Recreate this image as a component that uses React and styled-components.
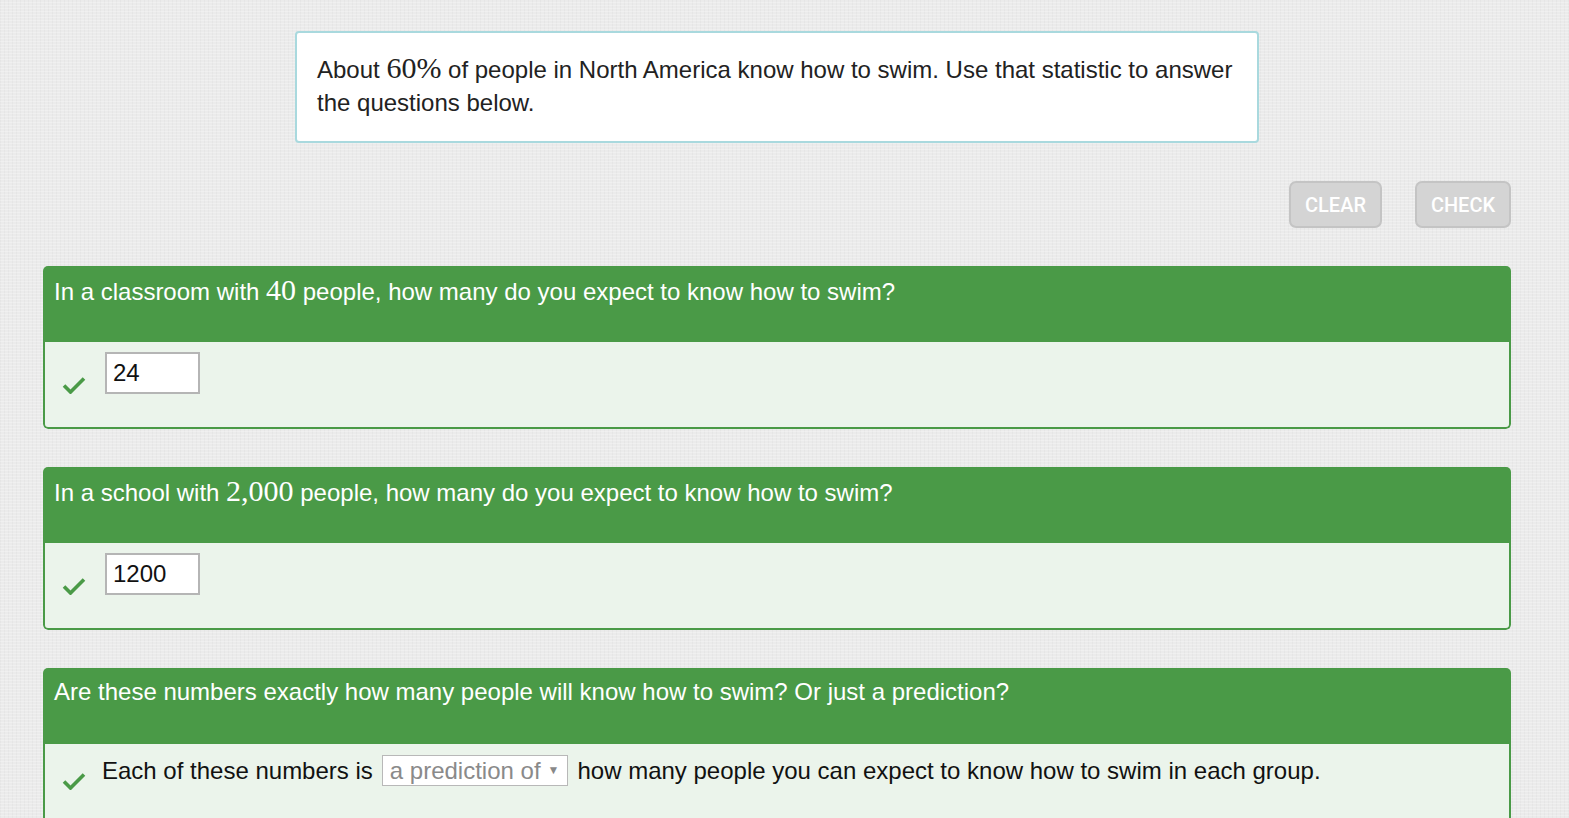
import React from 'react';
import styled, { createGlobalStyle } from 'styled-components';

const GlobalStyle = createGlobalStyle`
  body {
    margin: 0;
    background-color: #ebebeb;
    background-image:
      repeating-linear-gradient(0deg, rgba(255, 255, 255, 0.25) 0 1px, transparent 1px 3px),
      repeating-linear-gradient(90deg, rgba(0, 0, 0, 0.025) 0 1px, transparent 1px 4px);
    font-family: 'Liberation Sans', Arial, sans-serif;
    color: #222;
  }
`;

const Page = styled.div`
  width: 1468px;
  margin-left: 43px;
  padding-top: 31px;
  display: flex;
  flex-direction: column;
`;

const Intro = styled.div`
  width: 964px;
  box-sizing: border-box;
  align-self: center;
  background: #fff;
  border: 2px solid #a9d9de;
  border-radius: 4px;
  padding: 20px 20px 22px 20px;
  font-size: 24px;
  line-height: 33px;
`;

const Math = styled.span`
  font-family: 'Liberation Serif', 'Times New Roman', serif;
  font-size: 30px;
  line-height: 1;
`;

const Toolbar = styled.div`
  display: flex;
  justify-content: flex-end;
  gap: 33px;
  margin: 38px 0 38px;
`;

const ToolButton = styled.button`
  height: 47px;
  width: ${(p) => p.$w}px;
  box-sizing: border-box;
  background: #d4d4d4;
  border: 2px solid #c4c4c4;
  border-radius: 7px;
  color: #fff;
  font-family: Roboto, 'Liberation Sans', sans-serif;
  font-weight: 500;
  font-size: 20px;
  padding: 0;
`;

const Card = styled.section`
  margin-bottom: 38px;
  border-radius: 5px;
  overflow: hidden;
`;

const CardHeader = styled.div`
  background: #4a9a47;
  color: #fff;
  height: 76px;
  box-sizing: border-box;
  padding: 9px 11px 0;
  font-size: 24px;
  line-height: 30px;
`;

const CardBody = styled.div`
  background: #ebf4eb;
  border: 2px solid #4a9a47;
  border-top: none;
  border-radius: 0 0 5px 5px;
  height: ${(p) => p.$h}px;
  box-sizing: border-box;
  padding: ${(p) => p.$pad};
  display: flex;
  align-items: flex-start;
  gap: ${(p) => p.$gap}px;
  font-size: 24px;
`;

const CheckMark = styled.svg`
  width: 24px;
  height: 18px;
  flex: none;
  margin-top: ${(p) => p.$top}px;
`;

const AnswerInput = styled.div`
  width: 95px;
  height: 42px;
  box-sizing: border-box;
  background: #fff;
  border: 2px solid #b5b5b5;
  padding: 0 6px;
  font-size: 24px;
  line-height: 38px;
  color: #111;
`;

const SentenceRow = styled.div`
  display: flex;
  align-items: center;
  gap: 9px;
  line-height: 30px;
  color: #111;
`;

const Select = styled.div`
  height: 31px;
  box-sizing: border-box;
  border: 1px solid #b8b8b8;
  background: #fff;
  padding: 0 8px 0 7px;
  color: #8a8a8a;
  display: flex;
  align-items: center;
  gap: 7px;
  line-height: 29px;
`;

const Caret = styled.span`
  font-size: 12px;
  color: #888;
`;

const Check = ({ top }) => (
  <CheckMark $top={top} viewBox="0 0 24 18">
    <path d="M2 9.5 L8.5 16 L22 2.5" fill="none" stroke="#4a9a47" strokeWidth="3.6" />
  </CheckMark>
);

const NumberQuestion = ({ children, answer }) => (
  <Card>
    <CardHeader>{children}</CardHeader>
    <CardBody $h={87} $pad="10px 0 0 17px" $gap={19}>
      <Check top={24} />
      <AnswerInput>{answer}</AnswerInput>
    </CardBody>
  </Card>
);

export default function App() {
  return (
    <>
      <GlobalStyle />
      <Page>
        <Intro>
          About <Math>60%</Math> of people in North America know how to swim. Use that statistic to answer the
          questions below.
        </Intro>
        <Toolbar>
          <ToolButton $w={93}>CLEAR</ToolButton>
          <ToolButton $w={96}>CHECK</ToolButton>
        </Toolbar>
        <NumberQuestion answer="24">
          In a classroom with <Math>40</Math> people, how many do you expect to know how to swim?
        </NumberQuestion>
        <NumberQuestion answer="1200">
          In a school with <Math>2,000</Math> people, how many do you expect to know how to swim?
        </NumberQuestion>
        <Card>
          <CardHeader>
            Are these numbers exactly how many people will know how to swim? Or just a prediction?
          </CardHeader>
          <CardBody $h={100} $pad="11px 0 0 17px" $gap={16}>
            <Check top={17} />
            <SentenceRow>
              Each of these numbers is
              <Select>
                a prediction of <Caret>▼</Caret>
              </Select>
              how many people you can expect to know how to swim in each group.
            </SentenceRow>
          </CardBody>
        </Card>
      </Page>
    </>
  );
}
